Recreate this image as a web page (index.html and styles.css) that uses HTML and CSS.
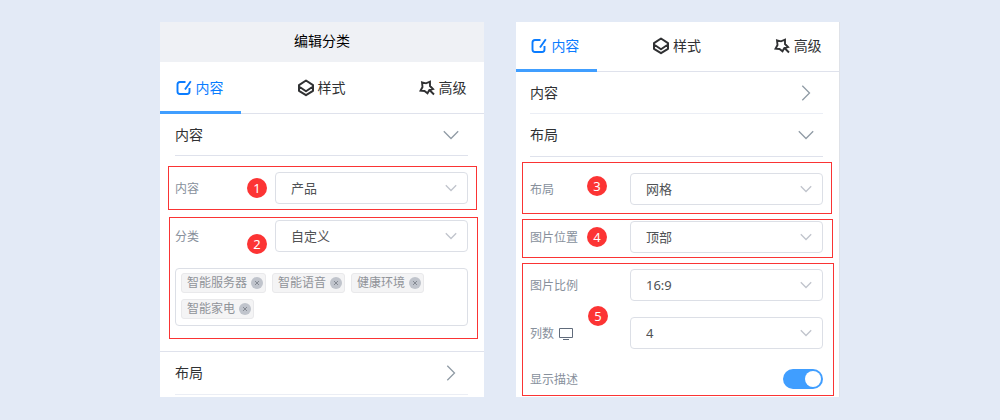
FILE: index.html
```
<!DOCTYPE html>
<html lang="zh-CN">
<head>
<meta charset="utf-8">
<title>编辑分类</title>
<link rel="stylesheet" href="styles.css">
</head>
<body>
<svg class="symbols" aria-hidden="true">
  <symbol id="edit" viewBox="0 0 16 16"><path d="M9.500 2H4Q1.500 2 1.500 4.500V11.500Q1.500 14 4 14H11Q13.500 14 13.500 11.500V8M14.800 1.200L9 9.500" fill="none" stroke="currentColor" stroke-width="1.900"/></symbol>
  <symbol id="layers" viewBox="0 0 18 18"><path d="M9 1.500L16 6.200V7.500L9 12.300L2 7.500V6.200ZM2 7.500V11.800L9 16.200L16 11.800V7.500" fill="none" stroke="currentColor" stroke-width="2" stroke-linejoin="round"/></symbol>
  <symbol id="wand" viewBox="0 0 16 16"><path d="M3 2.300L7 3.300L11 1.700V6L14 9L10.300 10L8.500 13.300L5.500 11L1.500 10.700L3.500 7ZM11 10.500L15 14.500" fill="none" stroke="currentColor" stroke-width="1.900"/></symbol>
  <symbol id="down" viewBox="0 0 16 16"><path d="M.8 4.300L8 11.500L15.200 4.300" fill="none" stroke="currentColor" stroke-width="1.300"/></symbol>
  <symbol id="arrow" viewBox="0 0 12 12"><path d="M.8 3.300L6 8.500L11.200 3.300" fill="none" stroke="currentColor" stroke-width="1.300"/></symbol>
  <symbol id="right" viewBox="0 0 16 16"><path d="M4.300 .8L11.500 8L4.300 15.200" fill="none" stroke="currentColor" stroke-width="1.300"/></symbol>
  <symbol id="close" viewBox="0 0 12 12"><circle cx="6" cy="6" r="6" fill="#c0c4cc"/><path d="M4 4L8 8M8 4L4 8" stroke="#858a93"/></symbol>
  <symbol id="monitor" viewBox="0 0 14 14"><path d="M.5 1.500H13.500V10.500H.5ZM4 12.500H10" fill="none" stroke="currentColor"/></symbol>
</svg>
<main class="page">
  <section class="panel">
    <h1 class="title">编辑分类</h1>
    <nav class="tabs">
      <button class="tab active" type="button"><svg class="tab-icon"><use href="#edit"/></svg>内容</button>
      <button class="tab" type="button"><svg class="tab-icon large"><use href="#layers"/></svg>样式</button>
      <button class="tab" type="button"><svg class="tab-icon"><use href="#wand"/></svg>高级</button>
    </nav>
    <button class="section" type="button">内容<svg class="section-icon"><use href="#down"/></svg></button>
    <div class="group content-group">
      <div class="row">
        <label class="label" for="content">内容</label>
        <div class="select"><select id="content"><option>产品</option></select><svg class="arrow"><use href="#arrow"/></svg></div>
      </div>
      <span class="badge">1</span>
    </div>
    <div class="group category-group">
      <div class="row">
        <label class="label" for="category">分类</label>
        <div class="select"><select id="category"><option>自定义</option></select><svg class="arrow"><use href="#arrow"/></svg></div>
      </div>
      <div class="tags">
        <span class="tag">智能服务器<button class="remove" type="button" aria-label="移除智能服务器"><svg><use href="#close"/></svg></button></span>
        <span class="tag">智能语音<button class="remove" type="button" aria-label="移除智能语音"><svg><use href="#close"/></svg></button></span>
        <span class="tag">健康环境<button class="remove" type="button" aria-label="移除健康环境"><svg><use href="#close"/></svg></button></span>
        <span class="tag">智能家电<button class="remove" type="button" aria-label="移除智能家电"><svg><use href="#close"/></svg></button></span>
      </div>
      <span class="badge low">2</span>
    </div>
    <div class="next">
      <button class="section light" type="button">布局<svg class="section-icon"><use href="#right"/></svg></button>
    </div>
  </section>

  <section class="panel layout-panel">
    <nav class="tabs">
      <button class="tab active" type="button"><svg class="tab-icon"><use href="#edit"/></svg>内容</button>
      <button class="tab" type="button"><svg class="tab-icon large"><use href="#layers"/></svg>样式</button>
      <button class="tab" type="button"><svg class="tab-icon"><use href="#wand"/></svg>高级</button>
    </nav>
    <button class="section light" type="button">内容<svg class="section-icon"><use href="#right"/></svg></button>
    <button class="section" type="button">布局<svg class="section-icon"><use href="#down"/></svg></button>
    <div class="group layout-group">
      <div class="row">
        <label class="label" for="layout">布局</label>
        <div class="select"><select id="layout"><option>网格</option></select><svg class="arrow"><use href="#arrow"/></svg></div>
      </div>
      <span class="badge">3</span>
    </div>
    <div class="group position-group">
      <div class="row">
        <label class="label" for="position">图片位置</label>
        <div class="select"><select id="position"><option>顶部</option></select><svg class="arrow"><use href="#arrow"/></svg></div>
      </div>
      <span class="badge">4</span>
    </div>
    <div class="group display-group">
      <div class="row">
        <label class="label" for="ratio">图片比例</label>
        <div class="select"><select id="ratio"><option>16:9</option></select><svg class="arrow"><use href="#arrow"/></svg></div>
      </div>
      <div class="row">
        <label class="label" for="columns">列数<svg class="monitor"><use href="#monitor"/></svg></label>
        <div class="select"><select id="columns"><option>4</option></select><svg class="arrow"><use href="#arrow"/></svg></div>
      </div>
      <div class="row switch-row">
        <label class="label" for="description">显示描述</label>
        <input class="switch" id="description" type="checkbox" role="switch" checked>
      </div>
      <span class="badge middle">5</span>
    </div>
  </section>
</main>
</body>
</html>
```
FILE: styles.css
```
* { box-sizing: border-box; }
body {
  margin: 0;
  background: #e3eaf6;
  color: #303133;
  font: 14px/20px "Noto Sans", "Noto Sans CJK SC", sans-serif;
}
button { border: 0; background: none; color: inherit; font: inherit; cursor: pointer; }
svg { display: block; flex: none; }
.symbols { position: absolute; width: 0; height: 0; }

.page {
  display: grid;
  grid-template-columns: 1fr 1fr;
  align-items: start;
  gap: 32px;
  padding: 22px 16%;
}
.panel { --start: 15px; --end: 16px; background: #fff; }
.layout-panel { --start: 14px; padding-bottom: 1px; border-right: 1px solid #dfe2e8; }
.title {
  margin: 0;
  padding: 9px 0 11px;
  background: #eff1f5;
  color: #000;
  font-size: 14px;
  font-weight: 400;
  text-align: center;
}

.tabs { display: flex; justify-content: space-between; height: 52px; box-shadow: inset 0 -1px #dfe2ec; }
.tab {
  display: flex;
  align-items: center;
  justify-content: center;
  gap: 4px;
  width: 25%;
  padding: 2px 2px 0 0;
  border-bottom: 3px solid transparent;
}
.layout-panel .tabs { height: 50px; }
.layout-panel .tab { padding-top: 0; }
.tab.active { border-color: #409eff; color: #0a7cff; }
.tab-icon { width: 16px; height: 16px; }
.tab-icon.large { width: 18px; height: 18px; }
.tab:has(.large) { gap: 3px; }

.section {
  display: flex;
  align-items: center;
  justify-content: space-between;
  width: calc(100% - var(--start) - var(--end));
  height: 42px;
  margin: 0 var(--end) 0 var(--start);
  padding: 0 9px 0 0;
  border-bottom: 1px solid #dfe2ec;
}
.section.light { border-color: #ebeef5; }
.section-icon { width: 16px; height: 16px; color: #909ba5; }
.layout-panel .section + .section { height: 43px; }
.next { margin-top: 12px; padding-bottom: 2px; border-top: 1px solid #dfe2ec; }
.next .section { height: 43px; }

.group { position: relative; border: 1px solid #fa3434; }
.content-group { margin: 10px 7px 0 8px; padding: 5px 8px 5px 6px; }
.category-group { margin: 7px 6px 0 9px; padding: 2px 9px 12px 5px; }
.layout-group { margin: 5px 7px 0 6px; padding: 10px 8px 8px 7px; }
.position-group { margin: 5px 6px 0 6px; padding: 1px 9px 4px 7px; }
.display-group {
  display: grid;
  gap: 16px;
  margin: 5px 5px 0 6px;
  padding: 5px 10px 2px 7px;
}
.row { display: flex; align-items: center; min-height: 32px; }
.switch-row { min-height: 28px; justify-content: space-between; }
.label {
  display: flex;
  align-items: center;
  gap: 5px;
  flex: 0 0 100px;
  padding-top: 2px;
  color: #87909c;
  font-size: 12px;
}
.monitor { width: 14px; height: 14px; color: #606b7b; }
.select { position: relative; flex: 1; }
.select select {
  display: block;
  width: 100%;
  height: 32px;
  padding: 0 30px 0 15px;
  appearance: none;
  border: 1px solid #dcdfe6;
  border-radius: 4px;
  background: #fff;
  color: #505255;
  font: inherit;
  font-size: 13px;
}
.arrow {
  position: absolute;
  top: 10px;
  right: 11px;
  width: 12px;
  height: 12px;
  color: #c0c4cc;
  pointer-events: none;
}

.tags {
  display: flex;
  flex-wrap: wrap;
  gap: 6px;
  margin-top: 16px;
  padding: 4px 5px 6px;
  border: 1px solid #dcdfe6;
  border-radius: 4px;
}
.tag {
  display: flex;
  align-items: center;
  gap: 4px;
  height: 20px;
  padding: 0 2px 0 5px;
  border: 1px solid #e9e9eb;
  border-radius: 3px;
  background: #f4f4f5;
  color: #909399;
  font-size: 12px;
  line-height: 18px;
}
.remove { padding: 0; }
.remove svg { width: 12px; height: 12px; }

.badge {
  position: absolute;
  top: 11px;
  left: 78px;
  width: 20px;
  height: 20px;
  border-radius: 50%;
  background: #fc3434;
  color: #fff;
  font-size: 13px;
  text-align: center;
}
.badge.low { top: 16px; left: 77px; }
.layout-panel .badge { left: 64px; }
.layout-group .badge { top: 13px; }
.position-group .badge { top: 7px; }
.layout-panel .badge.middle { top: 42px; left: 65px; }

.switch {
  width: 40px;
  height: 20px;
  margin: 0;
  padding: 2px;
  appearance: none;
  border-radius: 10px;
  background: #c0c4cc;
}
.switch::before {
  content: "";
  display: block;
  width: 16px;
  height: 16px;
  border-radius: 50%;
  background: #fff;
}
.switch:checked { background: #409eff; }
.switch:checked::before { margin-left: auto; }
```
